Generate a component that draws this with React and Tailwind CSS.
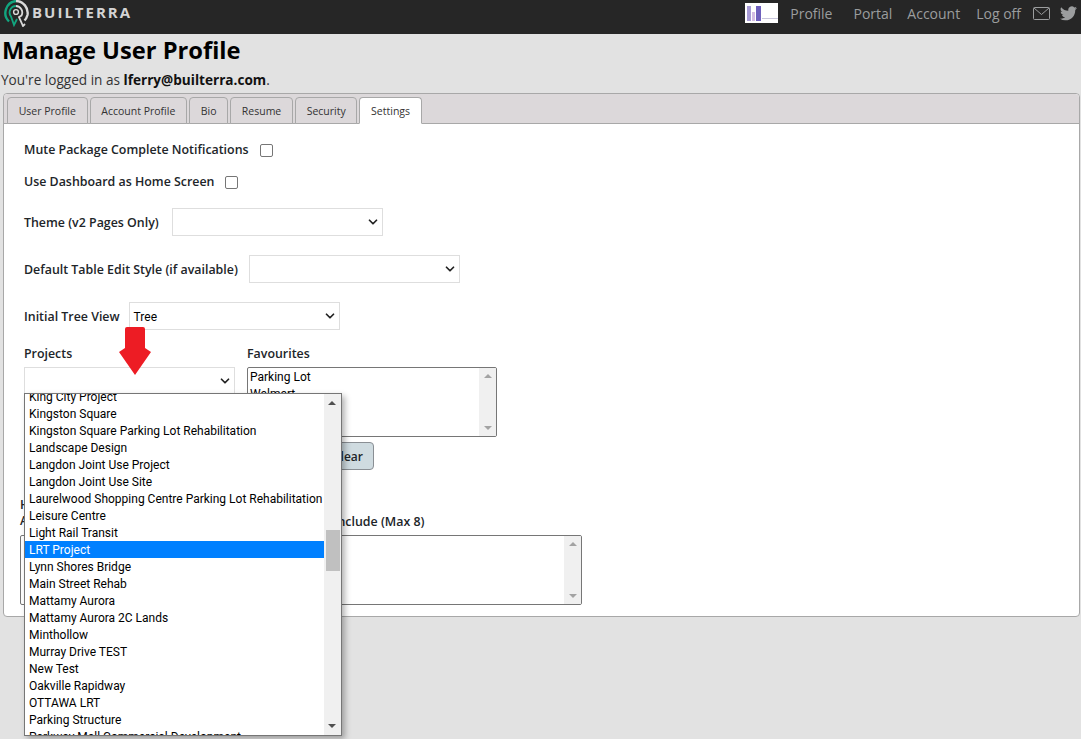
import React from "react";
import { ChevronDown } from "lucide-react";

const tabs = ["User Profile", "Account Profile", "Bio", "Resume", "Security", "Settings"];

const projects = [
  "King City Project",
  "Kingston Square",
  "Kingston Square Parking Lot Rehabilitation",
  "Landscape Design",
  "Langdon Joint Use Project",
  "Langdon Joint Use Site",
  "Laurelwood Shopping Centre Parking Lot Rehabilitation",
  "Leisure Centre",
  "Light Rail Transit",
  "LRT Project",
  "Lynn Shores Bridge",
  "Main Street Rehab",
  "Mattamy Aurora",
  "Mattamy Aurora 2C Lands",
  "Minthollow",
  "Murray Drive TEST",
  "New Test",
  "Oakville Rapidway",
  "OTTAWA LRT",
  "Parking Structure",
  "Parkway Mall Commercial Development",
];

const Logo = () => (
  <svg width="27" height="27" viewBox="0 0 27 27" fill="none">
    <path d="M13 1 A12 12 0 0 0 6 21.5" stroke="#12a57f" strokeWidth="2.4" />
    <path d="M13 1 A12 12 0 0 1 24.5 15 Q23.5 18.5 21.5 20.5" stroke="#d9d9d9" strokeWidth="2.4" />
    <path d="M13 6 A6.5 6.5 0 0 0 8 16.5 L11 25 L14 19" stroke="#12a57f" strokeWidth="1.8" />
    <path d="M13 6 A6.5 6.5 0 0 1 18.5 15.5 L16 17 L20 26 L22 24" stroke="#d9d9d9" strokeWidth="1.8" />
    <circle cx="13" cy="12" r="2.4" stroke="#d9d9d9" strokeWidth="1.4" />
  </svg>
);

const SelectBox = ({ className, value }) => (
  <div className={`flex items-center justify-between border border-[#dedede] bg-white pl-[4px] pr-[2px] font-['Roboto',sans-serif] text-[12px] font-normal text-black ${className}`}>
    <span className="pt-[2px]">{value}</span>
    <ChevronDown size={14} strokeWidth={3} className="text-[#222]" />
  </div>
);

const CheckBox = () => <span className="inline-block h-[13px] w-[13px] rounded-[2px] border border-[#767676] bg-white" />;

const ListBox = ({ className, items = [] }) => (
  <div className={`flex overflow-hidden rounded-[2px] border border-[#767676] bg-white ${className}`}>
    <div className="flex-1 overflow-hidden pl-[2px] pt-[1px] font-['Roboto',sans-serif] text-[12px] font-normal leading-[17px] text-black">
      {items.map((item) => (
        <div key={item}>{item}</div>
      ))}
    </div>
    <div className="flex w-[17px] flex-col items-center justify-between bg-[#f0f0f0] py-[6px]">
      <span className="h-0 w-0 border-x-[4px] border-b-[4px] border-x-transparent border-b-[#a3a3a3]" />
      <span className="h-0 w-0 border-x-[4px] border-t-[4px] border-x-transparent border-t-[#a3a3a3]" />
    </div>
  </div>
);

const App = () => (
  <div className="relative h-[739px] overflow-hidden bg-[#e2e2e2] font-['Open_Sans',sans-serif] text-[#212529]">
    <header className="flex h-[34px] items-start justify-between bg-[#262626]">
      <div className="flex items-center pl-[3px]">
        <Logo />
        <span className="ml-[2px] mt-[-2px] text-[15px] font-bold tracking-[2px] text-[#d4d4d4]">BUILTERRA</span>
      </div>
      <nav className="flex h-[26px] items-center text-[14px] text-[#9b9d9e]">
        <div className="mr-[12px] flex h-[20px] w-[33px] items-end gap-[1px] bg-white pb-[2px] pl-[2px]">
          <span className="h-[15px] w-[4px] bg-[#a79bd6]" />
          <span className="h-[9px] w-[3px] bg-[#d3bde4]" />
          <span className="h-[15px] w-[5px] bg-[#6f60bd]" />
          <span className="mb-[2px] h-[1px] w-[16px] bg-[#c9c6dc]" />
        </div>
        <span className="mr-[21px]">Profile</span>
        <span className="mr-[15px]">Portal</span>
        <span className="mr-[16px]">Account</span>
        <span className="mr-[12px]">Log off</span>
        <svg width="17" height="13" viewBox="0 0 17 13" fill="none" stroke="#9b9d9e" className="mr-[10px]">
          <rect x="0.5" y="0.5" width="16" height="12" rx="1" />
          <path d="M1 1 L8.5 7.5 L16 1" />
        </svg>
        <svg width="17" height="15" viewBox="0 0 24 20" fill="#9b9d9e" className="mr-[4px]">
          <path d="M24 2.4a9.8 9.8 0 0 1-2.8.8A4.9 4.9 0 0 0 23.3.5a9.8 9.8 0 0 1-3.1 1.2 4.9 4.9 0 0 0-8.4 4.5A13.9 13.9 0 0 1 1.7 1a4.9 4.9 0 0 0 1.5 6.6 4.9 4.9 0 0 1-2.2-.6v.1a4.9 4.9 0 0 0 3.9 4.8 4.9 4.9 0 0 1-2.2.1 4.9 4.9 0 0 0 4.6 3.4A9.9 9.9 0 0 1 0 17.4 13.9 13.9 0 0 0 7.5 19.6c9.1 0 14-7.5 14-14v-.6A10 10 0 0 0 24 2.4z" />
        </svg>
      </nav>
    </header>

    <div className="pl-[2px]">
      <h1 className="text-[23.7px] font-bold leading-[32px] text-black">Manage User Profile</h1>
      <p className="ml-[-1px] mt-[2px] text-[13.6px] leading-[24px] text-[#333]">
        You're logged in as <b className="font-bold text-[#111]">lferry@builterra.com</b>.
      </p>
    </div>

    <section className="ml-[3px] mr-[1px] mt-[1px] h-[524px] rounded-[4px] border border-[#a8a8a8] bg-white">
      <div className="flex h-[30px] items-end gap-[2px] rounded-t-[4px] border-b border-[#a8a8a8] bg-[#dcd8da] pl-[3px]">
        {tabs.map((tab) => (
          <div
            key={tab}
            className={`mb-[-1px] flex h-[27px] items-center rounded-t-[4px] border border-[#a8a8a8] px-[10.7px] pt-[2px] text-[10.5px] text-[#333] ${
              tab === "Settings" ? "border-b-white bg-white" : "bg-[#dcd8da]"
            }`}
          >
            {tab}
          </div>
        ))}
      </div>

      <div className="pl-[20px] text-[12.4px] font-semibold">
        <div className="mt-[17px] flex h-[18px] items-center">
          Mute Package Complete Notifications
          <span className="ml-[11px] flex"><CheckBox /></span>
        </div>
        <div className="mt-[14px] flex h-[18px] items-center">
          Use Dashboard as Home Screen
          <span className="ml-[11px] flex"><CheckBox /></span>
        </div>
        <div className="mt-[17px] flex items-center">
          <span className="pt-[2px]">Theme (v2 Pages Only)</span>
          <SelectBox className="ml-[13px] h-[28px] w-[211px]" />
        </div>
        <div className="mt-[19px] flex items-center">
          <span className="pt-[2px]">Default Table Edit Style (if available)</span>
          <SelectBox className="ml-[11px] h-[28px] w-[211px]" />
        </div>
        <div className="mt-[19px] flex items-center">
          <span className="pt-[2px]">Initial Tree View</span>
          <SelectBox className="ml-[9px] h-[28px] w-[211px]" value="Tree" />
        </div>

        <div className="mt-[15px] flex">
          <div className="w-[223px]">
            <div className="leading-[18px]">Projects</div>
            <SelectBox className="mt-[4px] h-[28px] w-[211px]" />
          </div>
          <div>
            <div className="leading-[18px]">Favourites</div>
            <ListBox className="mt-[4px] h-[70px] w-[250px]" items={["Parking Lot", "Walmart"]} />
            <div className="mt-[5px] flex justify-end pr-[123px]">
              <button className="h-[28px] rounded-[4px] border border-[#8a8f94] bg-[#cfdbe0] px-[10px] pt-[2px] text-[12px] font-semibold">
                Add / Clear
              </button>
            </div>
          </div>
        </div>

        <div className="ml-[-4px] mt-[27px] flex">
          <div className="w-[227px]">
            <div className="leading-[16px]">Home Dashboard</div>
            <div className="leading-[16px]">Available Widgets</div>
            <ListBox className="mt-[6px] h-[70px] w-[211px]" />
          </div>
          <div>
            <div className="ml-[20px] mt-[17px] leading-[16px]">Widgets to Include (Max 8)</div>
            <ListBox className="mt-[5px] h-[70px] w-[335px]" />
          </div>
        </div>
      </div>
    </section>

    {/* open dropdown of the Projects select, with the red arrow drawn on top */}
    <svg width="34" height="50" viewBox="0 0 34 50" className="absolute left-[118px] top-[326px]">
      <path d="M9 1 H25 Q27 1 27 3 V22 L33 26 L17 49 L1 26 L7 22 V3 Q7 1 9 1 Z" fill="#ed1c24" />
    </svg>
    <div className="absolute left-[24px] top-[393px] flex h-[343px] w-[318px] overflow-hidden border border-[#767676] bg-white font-['Roboto',sans-serif] shadow-[3px_3px_6px_rgba(0,0,0,0.3)]">
      <div className="mt-[-6px] w-[299px] text-[12px] leading-[19px] text-black">
        {projects.map((project) => (
          <div key={project} className={`h-[17px] whitespace-nowrap pl-[4px] ${project === "LRT Project" ? "bg-[#0080ff] text-white" : ""}`}>
            {project}
          </div>
        ))}
      </div>
      <div className="relative w-[17px] bg-[#f0f0f0]">
        <span className="absolute left-[4px] top-[7px] h-0 w-0 border-x-[4px] border-b-[4px] border-x-transparent border-b-[#505050]" />
        <span className="absolute left-[2px] top-[136px] h-[41px] w-[14px] bg-[#c0c0c0]" />
        <span className="absolute bottom-[7px] left-[4px] h-0 w-0 border-x-[4px] border-t-[4px] border-x-transparent border-t-[#505050]" />
      </div>
    </div>
  </div>
);

export default App;
